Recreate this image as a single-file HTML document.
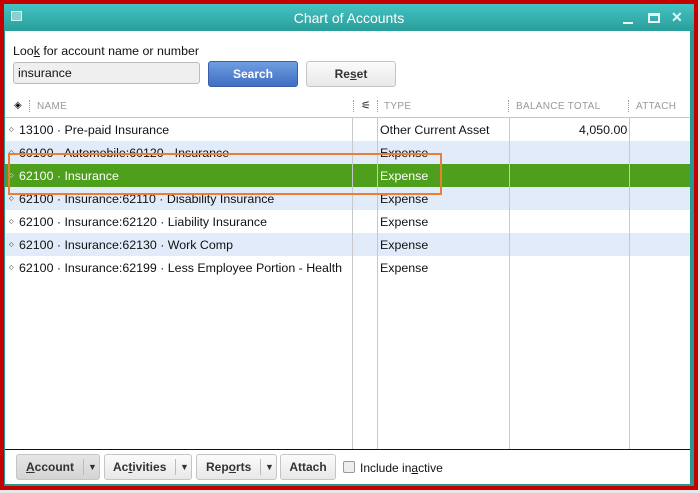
<!DOCTYPE html>
<html><head><style>
*{margin:0;padding:0;box-sizing:border-box}
body{width:700px;height:493px;overflow:hidden;background:#e8e8e8;font-family:"Liberation Sans",Arial,sans-serif;font-size:12px;position:relative;color:#111}
.red{position:absolute;left:0;top:0;width:698px;height:490px;background:#c40000}
.win{position:absolute;left:4px;top:4px;width:690px;height:482px;background:#279890}
.title{position:absolute;left:4px;top:4px;width:690px;height:27px;background:linear-gradient(#45c3c3,#2a9e9a);color:#fff;font-size:14px;text-align:center;line-height:28px}
.content{position:absolute;left:5px;top:31px;width:685px;height:453px;background:#fff}
.abs{position:absolute}
.btn{position:absolute;border:1px solid #c5c5c5;border-radius:3px;background:linear-gradient(#fbfbfb,#e8e8e8);font-weight:bold;color:#333;text-align:center}
.vl{position:absolute;top:97px;width:1px;height:352px;background:#c8c8c8}
.row{position:absolute;left:5px;width:685px;height:23px;line-height:25px;font-size:12.4px}
.row span{position:absolute}
.hd{position:absolute;top:101px;font-size:10px;color:#999;letter-spacing:.3px}
.dot{font-size:6px;line-height:24px}
.sep{position:absolute;top:100px;height:12px;border-left:1px dotted #999}
</style></head><body>
<div class="red"></div>
<div class="win"></div>
<div class="title">Chart of Accounts</div>
<div class="abs" style="left:11px;top:11px;width:11px;height:10px;border:1px solid #d8f0f0;background:#8ccfcf"></div>
<div class="abs" style="left:623px;top:22px;width:10px;height:2px;background:#e6f6f6"></div>
<div class="abs" style="left:648px;top:13px;width:12px;height:10px;border:2px solid #e6f6f6;border-top-width:3px"></div>
<div class="abs" style="left:671px;top:9px;color:#e6f6f6;font-size:14px;font-weight:bold">✕</div>
<div class="content"></div>
<div class="abs" style="left:13px;top:44px;font-size:12.4px">Loo<u>k</u> for account name or number</div>
<div class="abs" style="left:13px;top:62px;width:187px;height:22px;border:1px solid #bbb;border-radius:3px;background:#efefef;padding-left:4px;line-height:20px;font-size:12.4px">insurance</div>
<div class="btn" style="left:208px;top:61px;width:90px;height:26px;line-height:24px;background:linear-gradient(#6f9ee0,#3f6ec4);border-color:#3a5fa8;color:#fff">Search</div>
<div class="btn" style="left:306px;top:61px;width:90px;height:26px;line-height:24px">Re<u>s</u>et</div>
<div class="abs" style="left:14px;top:100px;font-size:10px">◈</div>
<div class="sep" style="left:29px"></div><div class="sep" style="left:353px"></div><div class="sep" style="left:377px"></div><div class="sep" style="left:508px"></div><div class="sep" style="left:628px"></div>
<div class="hd" style="left:37px">NAME</div>
<div class="hd" style="left:384px">TYPE</div>
<div class="hd" style="left:516px">BALANCE TOTAL</div>
<div class="hd" style="left:636px">ATTACH</div>
<div class="abs" style="left:361px;top:99px;font-size:11px">⚟</div>
<div class="abs" style="left:5px;top:117px;width:685px;height:1px;background:#c8c8c8"></div>
<div class="row" style="top:118px"><span style="left:4px" class="dot">◇</span><span style="left:14px">13100 · Pre-paid Insurance</span><span style="left:375px">Other Current Asset</span><span style="left:574px">4,050.00</span></div>
<div class="row" style="top:141px;background:#e1ebf9"><span style="left:4px" class="dot">◇</span><span style="left:14px">60100 · Automobile:60120 · Insurance</span><span style="left:375px">Expense</span></div>
<div class="row" style="top:164px;background:#4e9f1b;color:#fff"><span style="left:4px" class="dot">◇</span><span style="left:14px">62100 · Insurance</span><span style="left:375px">Expense</span></div>
<div class="row" style="top:187px;background:#e1ebf9"><span style="left:4px" class="dot">◇</span><span style="left:14px">62100 · Insurance:62110 · Disability Insurance</span><span style="left:375px">Expense</span></div>
<div class="row" style="top:210px"><span style="left:4px" class="dot">◇</span><span style="left:14px">62100 · Insurance:62120 · Liability Insurance</span><span style="left:375px">Expense</span></div>
<div class="row" style="top:233px;background:#e1ebf9"><span style="left:4px" class="dot">◇</span><span style="left:14px">62100 · Insurance:62130 · Work Comp</span><span style="left:375px">Expense</span></div>
<div class="row" style="top:256px"><span style="left:4px" class="dot">◇</span><span style="left:14px">62100 · Insurance:62199 · Less Employee Portion - Health</span><span style="left:375px">Expense</span></div>
<div class="vl" style="left:352px;top:118px;height:331px"></div>
<div class="vl" style="left:377px;top:118px;height:331px"></div>
<div class="vl" style="left:509px;top:118px;height:331px"></div>
<div class="vl" style="left:629px;top:118px;height:331px"></div>
<div class="abs" style="left:8px;top:153px;width:434px;height:42px;border:2px solid #ea7f33"></div>
<div class="abs" style="left:5px;top:449px;width:685px;height:1px;background:#111"></div>
<div class="btn" style="left:16px;top:454px;width:84px;height:26px;line-height:24px;background:linear-gradient(#e6e6e6,#d4d4d4);text-align:left;padding-left:9px"><u>A</u>ccount<span style="position:absolute;left:66px;top:4px;height:16px;border-left:1px solid #bbb;font-size:9px;padding-left:4px;line-height:16px">▼</span></div>
<div class="btn" style="left:104px;top:454px;width:88px;height:26px;line-height:24px;text-align:left;padding-left:8px">Ac<u>t</u>ivities<span style="position:absolute;left:70px;top:4px;height:16px;border-left:1px solid #bbb;font-size:9px;padding-left:4px;line-height:16px">▼</span></div>
<div class="btn" style="left:196px;top:454px;width:81px;height:26px;line-height:24px;text-align:left;padding-left:9px">Rep<u>o</u>rts<span style="position:absolute;left:63px;top:4px;height:16px;border-left:1px solid #bbb;font-size:9px;padding-left:4px;line-height:16px">▼</span></div>
<div class="btn" style="left:280px;top:454px;width:56px;height:26px;line-height:24px">Attach</div>
<div class="abs" style="left:343px;top:461px;width:12px;height:12px;border:1px solid #999;border-radius:2px;background:#eee"></div>
<div class="abs" style="left:360px;top:461px">Include in<u>a</u>ctive</div>
</body></html>
